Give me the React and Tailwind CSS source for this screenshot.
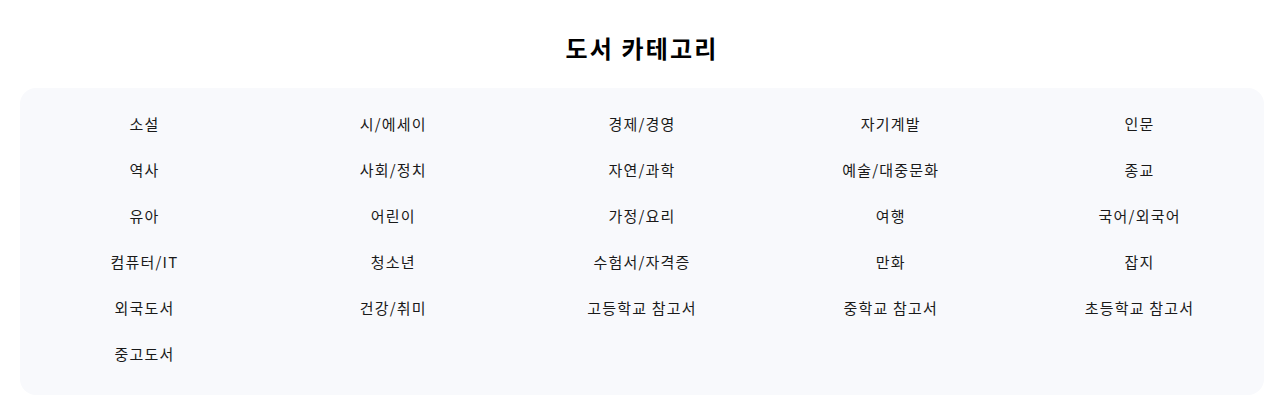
import React from "react";

const items = [
  "소설", "시/에세이", "경제/경영", "자기계발", "인문",
  "역사", "사회/정치", "자연/과학", "예술/대중문화", "종교",
  "유아", "어린이", "가정/요리", "여행", "국어/외국어",
  "컴퓨터/IT", "청소년", "수험서/자격증", "만화", "잡지",
  "외국도서", "건강/취미", "고등학교 참고서", "중학교 참고서", "초등학교 참고서",
  "중고도서",
];

export default function App() {
  return (
    <div
      className="w-[1280px] h-[416px] bg-white pl-5 pr-4 pt-8 text-[#111]"
      style={{ fontFamily: '"Noto Sans CJK KR", "Noto Sans", sans-serif' }}
    >
      <h2 className="text-2xl leading-8 font-bold text-center mb-6 text-black tracking-[0.09em]">도서 카테고리</h2>
      <div className="bg-[#f8f9fc] rounded-2xl px-4 pt-4 pb-[21px] grid grid-cols-5 gap-x-8 gap-y-1.5">
        {items.map((t) => (
          <div key={t} className="h-10 flex items-center justify-center text-[15px] text-[#1a1a1a] tracking-[0.08em]">
            {t}
          </div>
        ))}
      </div>
    </div>
  );
}
